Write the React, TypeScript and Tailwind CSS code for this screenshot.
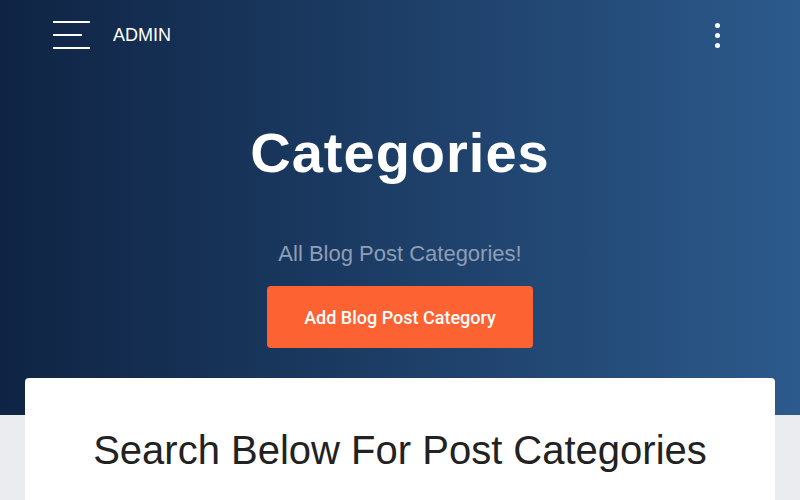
export default function App() {
  return (
    <main className="min-h-screen bg-[#ebecef] font-['Liberation_Sans',Arial,sans-serif]">
      <header className="h-[415px] bg-gradient-to-r from-[#0f2444] to-[#2c5a8c] text-white">
        <nav className="flex h-[70px] items-center justify-between pl-[53px] pr-[80px]">
          <div className="flex items-center gap-[22px]">
            <button className="flex w-[38px] flex-col gap-[11px]">
              <span className="block h-[2px] w-[37px] bg-white" />
              <span className="block h-[2px] w-[29px] bg-white" />
              <span className="block h-[2px] w-[37px] bg-white" />
            </button>
            <span className="text-[18px] leading-none">ADMIN</span>
          </div>
          <button className="flex flex-col items-center gap-[5px]">
            <span className="block h-[5px] w-[5px] rounded-full bg-white" />
            <span className="block h-[5px] w-[5px] rounded-full bg-white" />
            <span className="block h-[5px] w-[5px] rounded-full bg-white" />
          </button>
        </nav>

        <section className="flex flex-col items-center pt-[55px]">
          <h1 className="text-[56px] font-bold leading-none tracking-[1px]">Categories</h1>
          <p className="mt-[62px] text-[22px] leading-none text-[#8e9db5]">All Blog Post Categories!</p>
          <button className="mt-[21px] h-[62px] w-[266px] rounded-[4px] bg-[#fc6232] font-['Roboto',sans-serif] text-[18px] font-medium text-white">
            Add Blog Post Category
          </button>
        </section>
      </header>

      <section className="mx-[25px] -mt-[37px] rounded-t-[4px] bg-white pt-[52px] pb-10">
        <h2 className="text-center text-[40px] leading-none text-[#222]">Search Below For Post Categories</h2>
      </section>
    </main>
  );
}
